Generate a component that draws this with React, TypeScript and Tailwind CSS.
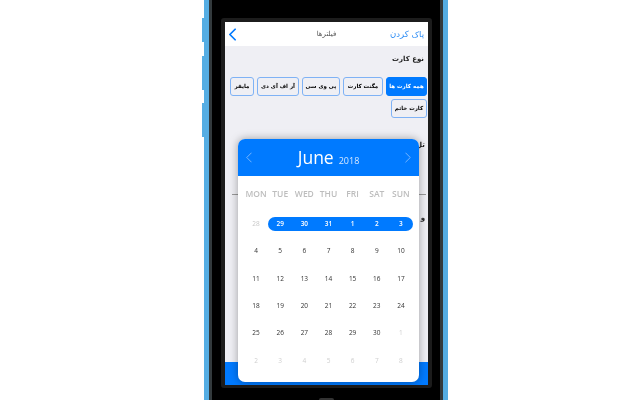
const weekdays = ['MON', 'TUE', 'WED', 'THU', 'FRI', 'SAT', 'SUN']

const weeks = [
  [28, 29, 30, 31, 1, 2, 3],
  [4, 5, 6, 7, 8, 9, 10],
  [11, 12, 13, 14, 15, 16, 17],
  [18, 19, 20, 21, 22, 23, 24],
  [25, 26, 27, 28, 29, 30, 1],
  [2, 3, 4, 5, 6, 7, 8],
]

function dayColor(row: number, col: number) {
  if (row === 0 && col === 0) return 'text-[#c8c8c8]'
  if (row === 0) return 'text-white font-semibold'
  if (row === 5 || (row === 4 && col === 6)) return 'text-[#cfcfcf]'
  return 'text-[#333333]'
}

function Chevron({ left, className }: { left?: boolean; className: string }) {
  return (
    <svg viewBox="0 0 8 14" fill="none" stroke="currentColor" strokeLinecap="round" strokeLinejoin="round" className={className}>
      <path d={left ? 'M7 1 L1 7 L7 13' : 'M1 1 L7 7 L1 13'} />
    </svg>
  )
}

function FilterButton({ label, width, active }: { label: string; width: string; active?: boolean }) {
  return (
    <div
      className={`${width} h-[19px] flex items-center justify-center whitespace-nowrap rounded-[3px] border text-[5.5px] font-bold ${
        active ? 'bg-[#007aff] border-[#007aff] text-white' : 'border-[#7fb2f5] bg-[#efeff4] text-black'
      }`}
    >
      {label}
    </div>
  )
}

function Calendar() {
  return (
    <div className="absolute left-[13px] top-[117px] w-[181px] h-[243px] rounded-[7px] bg-white overflow-hidden shadow-[0_0_8px_rgba(0,0,0,0.35)] font-['Open_Sans',sans-serif]">
      <div className="h-[37px] bg-[#007aff] flex items-center justify-between px-[8px] text-white">
        <Chevron left className="w-[6px] h-[11px] text-[#9cc9ff]" />
        <div className="flex items-baseline gap-[5px]">
          <span className="text-[17.5px] leading-none">June</span>
          <span className="text-[9px] leading-none text-[#d5e8ff]">2018</span>
        </div>
        <Chevron className="w-[6px] h-[11px] text-[#9cc9ff]" />
      </div>
      <div className="px-[6px]">
        <div className="grid grid-cols-7 h-[34px] items-center pt-[3px]">
          {weekdays.map((day) => (
            <div key={day} className="text-center text-[8.5px] font-semibold text-[#bdbdbd]">
              {day}
            </div>
          ))}
        </div>
        <div className="flex flex-col">
          {weeks.map((week, row) => (
            <div key={row} className="grid grid-cols-7 h-[27.4px] items-center">
              {week.map((day, col) => (
                <div
                  key={col}
                  className={`h-[14px] flex items-center justify-center text-[6.5px] ${dayColor(row, col)} ${
                    row === 0 && col > 0 ? 'bg-[#007aff]' : ''
                  } ${row === 0 && col === 1 ? 'rounded-l-[7px]' : ''} ${row === 0 && col === 6 ? 'rounded-r-[7px]' : ''}`}
                >
                  {day}
                </div>
              ))}
            </div>
          ))}
        </div>
      </div>
    </div>
  )
}

export default function App() {
  return (
    <div className="h-[400px] w-[640px] overflow-hidden bg-white pl-[204px] font-['DejaVu_Sans',sans-serif] blur-[0.3px]">
      <div className="relative w-[244px] h-[400px] bg-[#55ade3] px-[5px]">
        <div className="absolute left-[-2px] top-[18px] w-[2px] h-[24px] bg-[#55ade3]" />
        <div className="absolute left-[-2px] top-[56px] w-[2px] h-[34px] bg-[#55ade3]" />
        <div className="absolute left-[-2px] top-[103px] w-[2px] h-[34px] bg-[#55ade3]" />
        <div className="h-full border-x-[3px] border-[#333a3d] bg-black pl-[9px] pr-[8px] pt-[18px]">
          <div className="w-[211px] h-[370px] rounded-[3px] border-[4px] border-b-[3px] border-[#1c1c1c]">
            <div dir="rtl" className="relative h-full flex flex-col bg-[#efeff4] text-right">
              <div className="h-[24px] bg-white flex items-center pr-[4px] pl-[4px]">
                <span className="flex-1 text-[8.5px] text-[#2f8ef5]">پاک کردن</span>
                <span className="text-[7px] text-[#555555]">فیلترها</span>
                <div className="flex-1 flex justify-end">
                  <Chevron left className="w-[7px] h-[13px] text-[#007aff] [stroke-width:2]" />
                </div>
              </div>
              <div className="pr-[4px] pt-[8px] text-[7px] font-bold text-[#222222] h-[31px]">نوع کارت</div>
              <div className="flex flex-wrap gap-x-[3px] gap-y-[3px] pr-[1px]">
                <FilterButton label="همه کارت ها" width="w-[41px]" active />
                <FilterButton label="مگنت کارت" width="w-[40px]" />
                <FilterButton label="پی وی سی" width="w-[38px]" />
                <FilterButton label="آر اف آی دی" width="w-[42px]" />
                <FilterButton label="مایفر" width="w-[24px]" />
                <FilterButton label="کارت خاتم" width="w-[36px]" />
              </div>
              <div className="pr-[3px] pt-[22px] text-[7px] font-bold text-[#222222]">تل</div>
              <div className="mt-[43px] mr-[2px] ml-[7px] h-px bg-[#999999]" />
              <div className="pr-[3px] pt-[18px] text-[7px] font-bold text-[#222222]">و</div>
              <div className="mt-auto h-[23px] bg-[#007aff]" />
              <div dir="ltr">
                <Calendar />
              </div>
            </div>
          </div>
          <div className="mx-auto mt-[10px] w-[15px] h-[2px] rounded-t-full bg-[#333333]" />
        </div>
      </div>
    </div>
  )
}
